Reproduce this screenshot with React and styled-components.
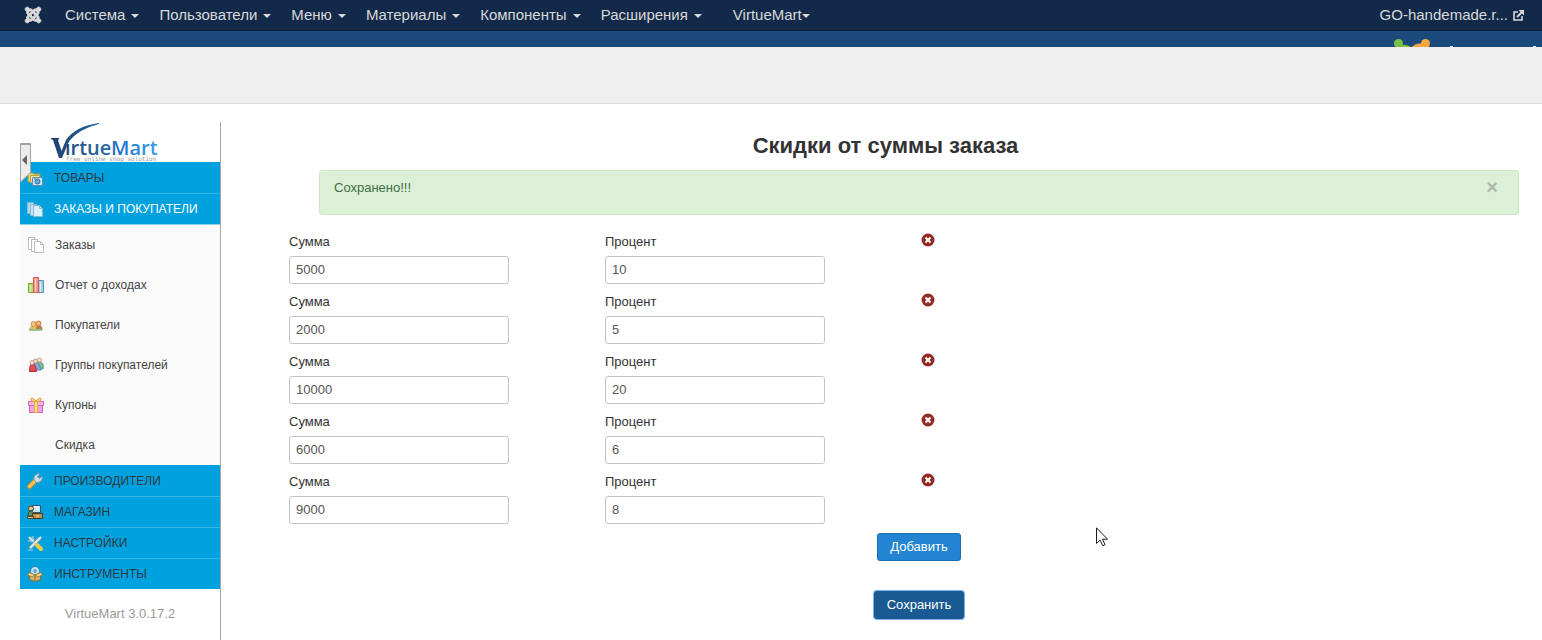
import React, { useState } from 'react';
import styled, { createGlobalStyle } from 'styled-components';
import { FaJoomla } from 'react-icons/fa';

const GlobalStyle = createGlobalStyle`
  * {
    box-sizing: border-box;
  }
  body {
    margin: 0;
    background: #fff;
    color: #333;
    font-family: "Liberation Sans", Arial, sans-serif;
    font-size: 13px;
    line-height: 18px;
  }
  button, input {
    font-family: inherit;
  }
`;

const Page = styled.div`
  display: flex;
  flex-direction: column;
  min-height: 100vh;
`;

const Navbar = styled.nav`
  display: flex;
  align-items: center;
  height: 31px;
  padding: 0 18px 0 24px;
  background: #13294a;
  border-bottom: 1px solid #0d1d35;
  color: #d9d9d9;
  font-size: 15px;
`;

const HomeLink = styled.a`
  display: flex;
  margin-right: 23px;
  color: #d9d9d9;
`;

const NavList = styled.ul`
  display: flex;
  flex: 1;
  gap: 20px;
  margin: 0;
  padding: 0;
  list-style: none;
`;

const NavItem = styled.li`
  margin-left: ${(props) => (props.$apart ? '11px' : '0')};
`;

const NavLink = styled.a`
  display: flex;
  align-items: center;
  gap: ${(props) => (props.$tight ? '0' : '6px')};
  color: #d9d9d9;
  text-decoration: none;
`;

const Caret = styled.span`
  margin-top: 2px;
  border-top: 4px solid #d9d9d9;
  border-left: 4px solid transparent;
  border-right: 4px solid transparent;
`;

const SiteLink = styled.a`
  display: flex;
  align-items: center;
  gap: 5px;
  color: #d9d9d9;
  text-decoration: none;
`;

const Band = styled.header`
  display: flex;
  justify-content: flex-end;
  height: 16px;
  overflow: hidden;
  background: #1a4a7c;
`;

const Subhead = styled.div`
  height: 57px;
  background: #efefef;
  border-bottom: 1px solid #dbdbdb;
`;

const Body = styled.div`
  display: flex;
  flex: 1;
  padding: 18px 23px 0 20px;
`;

const Sidebar = styled.aside`
  position: relative;
  flex: none;
  width: 201px;
  border-right: 1px solid #a8a8a8;
`;

const LogoLink = styled.a`
  display: block;
  height: 40px;
  padding-left: 30px;
`;

const Toggle = styled.button`
  position: absolute;
  top: 21px;
  left: 0;
  padding: 0;
  border: 0;
  background: none;
  line-height: 0;
`;

const SectionLink = styled.a`
  display: flex;
  align-items: center;
  gap: 11px;
  height: 31px;
  padding-left: 7px;
  background: #00a1df;
  border-top: 1px solid #00a1df;
  color: ${(props) => (props.$open ? '#fff' : '#2c3a42')};
  font-size: 12px;
  text-decoration: none;
  text-transform: uppercase;

  & + & {
    border-top-color: #35b4e6;
  }
`;

const SubMenu = styled.ul`
  margin: 0;
  padding: 0;
  background: #fafafa;
  border-top: 1px solid #8fd4ef;
  list-style: none;
`;

const SubLink = styled.a`
  display: flex;
  align-items: center;
  gap: 11px;
  height: 40px;
  padding-left: 8px;
  color: #444;
  font-size: 12px;
  text-decoration: none;
`;

const Version = styled.p`
  margin: 16px 0 0;
  color: #999;
  text-align: center;
`;

const Main = styled.main`
  flex: 1;
  padding: 9px 0 20px 31px;
`;

const Title = styled.h1`
  margin: 0 0 9px;
  font-size: 22px;
  line-height: 30px;
  text-align: center;
`;

const Content = styled.div`
  padding-left: 67px;
`;

const Alert = styled.div`
  display: flex;
  justify-content: space-between;
  align-items: flex-start;
  height: 45px;
  padding: 8px 20px 0 14px;
  background: #dcefd7;
  border: 1px solid #d0e6c4;
  border-radius: 3px;
  color: #3f6f43;
`;

const Close = styled.button`
  padding: 0;
  border: 0;
  background: none;
  color: #abbba7;
  font-size: 20px;
  font-weight: bold;
  line-height: 16px;
`;

const Rows = styled.div`
  display: grid;
  gap: 8px;
  margin: 17px 0 9px -30px;
`;

const Row = styled.div`
  display: grid;
  grid-template-columns: repeat(4, 1fr);
  column-gap: 34px;
`;

const Field = styled.label`
  display: flex;
  flex-direction: column;
  gap: 4px;
  line-height: 20px;
`;

const TextInput = styled.input`
  width: 220px;
  height: 28px;
  padding: 0 6px 2px;
  border: 1px solid #c4c4c4;
  border-radius: 3px;
  background: #fff;
  color: #555;
  font-size: 13px;
`;

const Remove = styled.button`
  justify-self: start;
  align-self: start;
  margin-top: 1px;
  padding: 0;
  border: 0;
  background: none;
  line-height: 0;
`;

const Actions = styled.div`
  display: flex;
  flex-direction: column;
  align-items: center;
  gap: 30px;
`;

const Button = styled.button`
  height: 28px;
  padding: 0 12px 2px;
  background: ${(props) => (props.$active ? '#185a91' : '#2384d3')};
  border: 1px solid ${(props) => (props.$active ? '#185a91' : '#1d6cb0')};
  border-radius: 3px;
  box-shadow: ${(props) => (props.$active ? '0 0 0 1px #7fb0ef' : 'none')};
  color: #fff;
  font-size: 13px;
`;

const Pointer = styled.svg`
  position: absolute;
  top: 527px;
  left: 1096px;
  pointer-events: none;
`;

const navItems = ['Система', 'Пользователи', 'Меню', 'Материалы', 'Компоненты', 'Расширения'];

const discounts = [
  { sum: '5000', percent: '10' },
  { sum: '2000', percent: '5' },
  { sum: '10000', percent: '20' },
  { sum: '6000', percent: '6' },
  { sum: '9000', percent: '8' },
];

const drawings = {
  products: (
    <g>
      <path d="M1 3h5l1 1h6v8H1z" fill="#e9d36a" stroke="#a99a4a" />
      <path d="M3.500 5.500h9v7h-9z" fill="#f2e59a" stroke="#b3a65a" />
      <path d="M5.500 7.500h10v8h-10z" fill="#cfe7f7" stroke="#5d8fb0" />
      <circle cx="10.500" cy="11.500" r="2.500" fill="#6fa9d8" stroke="#2f6ea5" />
      <path d="M7 9h2" stroke="#47779c" />
    </g>
  ),
  orders: (
    <g fill="#d8f0fb" stroke="#8ab9cf">
      <path d="M.5 1.500h6v11h-6z" fill="#a5daf2" />
      <path d="M3.500 3.500h6v11h-6z" fill="#bfe5f6" />
      <path d="M6.500 4.500h6l3 3v8h-9z" />
      <path d="M12.500 4.500v3h3" fill="none" />
    </g>
  ),
  pages: (
    <g fill="#fff" stroke="#bdbdbd">
      <path d="M.5.5h6v12h-6z" />
      <path d="M3.500 2.500h6v12h-6z" />
      <path d="M6.500 4.500h6l3 3v8h-9z" />
      <path d="M12.500 4.500v3h3" fill="none" />
    </g>
  ),
  chart: (
    <g>
      <path d="M.5 6.500h5v9h-5z" fill="#b4dc6a" stroke="#7da43c" />
      <path d="M10.500 3.500h5v12h-5z" fill="#9ccff2" stroke="#5b92c4" />
      <path d="M5.500.5h5v15h-5z" fill="#f59a8d" stroke="#d15a4e" />
      <path d="M2.500 8v7M12.500 5v10" stroke="#e1f2c6" />
      <path d="M7.500 2v13" stroke="#fcd2cb" />
    </g>
  ),
  buyers: (
    <g>
      <path d="M1 13q1-4 4-4h5q4 0 5 4z" fill="#8fc178" />
      <path d="M3 12q0-4 3-4t4 4z" fill="#e5c05a" />
      <path d="M8 12q0-4 3-4t3 4z" fill="#b9794c" />
      <circle cx="5.500" cy="7" r="2.500" fill="#f3c48c" stroke="#cf8f45" />
      <circle cx="10.500" cy="6.500" r="2.500" fill="#efb87b" stroke="#c27d37" />
      <path d="M1 13.500h13" stroke="#a9c89b" />
    </g>
  ),
  groups: (
    <g>
      <path d="M9 12q-1-7 3-7t3 7z" fill="#7fc08a" stroke="#5b9a70" />
      <circle cx="11.500" cy="3" r="2" fill="#fae5d2" stroke="#c9a58e" />
      <path d="M5 13q0-8 3-8t5 8z" fill="#83a9dc" stroke="#5f7fb5" />
      <circle cx="7.500" cy="4" r="2" fill="#f9dfc9" stroke="#b99a86" />
      <path d="M1.500 14.500q0-8 3-8t4 8z" fill="#de4d55" stroke="#b5333c" />
      <circle cx="4" cy="5.500" r="2" fill="#fbe7d9" stroke="#c3a08d" />
    </g>
  ),
  gift: (
    <g>
      <path d="M1.500 7.500h13v8h-13z" fill="#f5a3d8" stroke="#d169ae" />
      <path d="M.5 4.500h15v4H.5z" fill="#f8b7e2" stroke="#d169ae" />
      <path d="M6.500 4.500h3v11h-3z" fill="#fbe08c" stroke="#e2b14c" />
      <path d="M7.500 4.500Q3 5 3 2t5 2q5-5 5-2t-4.500 2.500z" fill="#fbd77b" stroke="#dca241" />
    </g>
  ),
  wrench: (
    <g>
      <path d="M2.500 13.500l6-6" stroke="#c98c24" strokeWidth="5" strokeLinecap="round" />
      <path d="M2.500 13.500l6-6" stroke="#f6c659" strokeWidth="3" strokeLinecap="round" />
      <path d="M7 7q-1-4 2-5.500t4-.5l-2.500 2.500 2 2L15 3q1 3-1 5t-4.500 1.500z" fill="#c9dce8" stroke="#6f93ab" />
    </g>
  ),
  shop: (
    <g>
      <path d="M5.500 1.500h8v7h-8z" fill="#bfe6fa" stroke="#35556b" />
      <path d="M7 3h5M9 5h3" stroke="#fff" />
      <circle cx="4" cy="4.500" r="2.500" fill="#e8c08c" stroke="#5b4529" />
      <path d="M1 12q0-5 3-5t3 5z" fill="#5f8f62" stroke="#2f4c3a" />
      <path d="M5.500 9.500h10v5h-10z" fill="#b9934b" stroke="#4f3d1c" />
      <path d="M.5 12.500h6v2h-6z" fill="#d7c9a1" stroke="#50452b" />
      <path d="M9 12h3" stroke="#f5e1a0" />
    </g>
  ),
  tools: (
    <g>
      <path d="M3 3l9 9" stroke="#7fa3b7" strokeWidth="4" />
      <path d="M2 2l10 10" stroke="#d3e5ee" strokeWidth="2" />
      <path d="M13 3l-10 10" stroke="#7597ab" strokeWidth="4" />
      <path d="M14 2l-11 11" stroke="#dcebf2" strokeWidth="2" />
      <path d="M10 10l4 4" stroke="#e6cf4f" strokeWidth="4" strokeLinecap="round" />
      <path d="M1 15h5M6 1v4M1 6h4" stroke="#bcd4e0" />
    </g>
  ),
  box: (
    <g>
      <circle cx="8" cy="5" r="4.500" fill="#bfe8fa" stroke="#3e81a8" />
      <path d="M6 4l2-1 2 1-1 3H7z" fill="#5ba4cf" />
      <path d="M2.500 7.500l5.500 2 5.500-2v6l-5.500 2-5.500-2z" fill="#d8b66b" stroke="#866a32" />
      <path d="M8 10v5" stroke="#866a32" />
      <path d="M2.500 6.500L.5 9l4.500 2 3-2zM13.500 6.500l2 2.500-4.500 2-3-2z" fill="#f0d797" stroke="#9a7b3b" />
    </g>
  ),
};

function MenuIcon({ name }) {
  return (
    <svg width="16" height="16" viewBox="0 0 16 16" fill="none">
      {drawings[name]}
    </svg>
  );
}

function Section({ icon, open, children }) {
  return (
    <SectionLink href="#" $open={open}>
      <MenuIcon name={icon} />
      {children}
    </SectionLink>
  );
}

function VirtueMartLogo() {
  return (
    <svg width="110" height="40" viewBox="0 0 110 40" role="img" aria-label="VirtueMart">
      <defs>
        <linearGradient id="word" gradientUnits="userSpaceOnUse" x1="0" y1="0" x2="108" y2="0">
          <stop offset="0" stopColor="#1d3f70" />
          <stop offset="0.55" stopColor="#2d6ca8" />
          <stop offset="0.65" stopColor="#1d74cf" />
          <stop offset="1" stopColor="#3ba0ea" />
        </linearGradient>
      </defs>
      <path d="M1 16h8v1l-1 1 3.500 11L16 18Q26 4 49 1v1Q29 7 19 19L12 36H9L3 18l-2-1z" fill="url(#word)" />
      <g fill="url(#word)" fontFamily="Open Sans, sans-serif" fontSize="20" fontWeight="600">
        <text x="15" y="33">irtue</text>
        <text x="61" y="33">Mart</text>
      </g>
      <text x="16" y="39" fill="#9a9a9a" fontFamily="DejaVu Sans Mono, monospace" fontSize="6">
        free online shop solution
      </text>
    </svg>
  );
}

export default function App() {
  const [rows, setRows] = useState(discounts);
  const [saved, setSaved] = useState(true);

  const change = (index, key, value) => {
    setRows(rows.map((row, i) => (i === index ? { ...row, [key]: value } : row)));
  };

  return (
    <Page>
      <GlobalStyle />
      <Navbar>
        <HomeLink href="#" aria-label="Joomla">
          <FaJoomla size={18} stroke="currentColor" strokeWidth={26} />
        </HomeLink>
        <NavList>
          {navItems.map((item) => (
            <NavItem key={item}>
              <NavLink href="#">{item}<Caret /></NavLink>
            </NavItem>
          ))}
          <NavItem $apart>
            <NavLink href="#" $tight>VirtueMart<Caret /></NavLink>
          </NavItem>
        </NavList>
        <SiteLink href="#">
          GO-handemade.r...
          <svg width="11" height="11" viewBox="0 0 11 11" fill="none" stroke="#d9d9d9">
            <path d="M5 2H1v8h8V6" strokeWidth="1.600" />
            <path d="M4 7l5-5" strokeWidth="2" />
            <path d="M5.500 0H11v5.500z" fill="#d9d9d9" stroke="none" />
          </svg>
        </SiteLink>
      </Navbar>
      <Band>
        <svg width="150" height="16" viewBox="0 0 150 16">
          <circle cx="6.500" cy="12.500" r="4.500" fill="#7ac143" />
          <path d="M5 17q6-6 14-1v1z" fill="#7ac143" />
          <circle cx="33.500" cy="12.500" r="4.500" fill="#f9a541" />
          <path d="M19 17q6-7 15-3v3z" fill="#f9a541" />
          <path d="M58 15h3v1h-3zM141 15h3v1h-3z" fill="#e8eef5" />
        </svg>
      </Band>
      <Subhead />
      <Body>
        <Sidebar>
          <LogoLink href="#"><VirtueMartLogo /></LogoLink>
          <Section icon="products">Товары</Section>
          <Section icon="orders" open>Заказы и покупатели</Section>
          <SubMenu>
            <li><SubLink href="#"><MenuIcon name="pages" />Заказы</SubLink></li>
            <li><SubLink href="#"><MenuIcon name="chart" />Отчет о доходах</SubLink></li>
            <li><SubLink href="#"><MenuIcon name="buyers" />Покупатели</SubLink></li>
            <li><SubLink href="#"><MenuIcon name="groups" />Группы покупателей</SubLink></li>
            <li><SubLink href="#"><MenuIcon name="gift" />Купоны</SubLink></li>
            <li><SubLink href="#"><MenuIcon />Скидка</SubLink></li>
          </SubMenu>
          <Section icon="wrench">Производители</Section>
          <Section icon="shop">Магазин</Section>
          <Section icon="tools">Настройки</Section>
          <Section icon="box">Инструменты</Section>
          <Version>VirtueMart 3.0.17.2</Version>
          <Toggle type="button" aria-label="Свернуть меню">
            <svg width="11" height="40" viewBox="0 0 11 40">
              <path d="M.5.5h10v29L.5 39z" fill="#ececec" stroke="#a3a3a3" />
              <path d="M1 1.500h9" stroke="#a3a3a3" />
              <path d="M7 12v10l-5-5z" fill="#666" />
            </svg>
          </Toggle>
        </Sidebar>
        <Main>
          <Title>Скидки от суммы заказа</Title>
          <Content>
            {saved && (
              <Alert role="alert">
                Сохранено!!!
                <Close type="button" aria-label="Закрыть" onClick={() => setSaved(false)}>×</Close>
              </Alert>
            )}
            <Rows>
              {rows.map((row, index) => (
                <Row key={index}>
                  <Field>
                    Сумма
                    <TextInput value={row.sum} onChange={(e) => change(index, 'sum', e.target.value)} />
                  </Field>
                  <Field>
                    Процент
                    <TextInput value={row.percent} onChange={(e) => change(index, 'percent', e.target.value)} />
                  </Field>
                  <Remove
                    type="button"
                    aria-label="Удалить"
                    onClick={() => setRows(rows.filter((r, i) => i !== index))}
                  >
                    <svg width="14" height="14" viewBox="0 0 14 14">
                      <circle cx="7" cy="7" r="6.500" fill="#942a25" />
                      <path d="M4.500 4.500l5 5M9.500 4.500l-5 5" stroke="#fff" strokeWidth="2" />
                    </svg>
                  </Remove>
                </Row>
              ))}
            </Rows>
            <Actions>
              <Button type="button" onClick={() => setRows([...rows, { sum: '', percent: '' }])}>
                Добавить
              </Button>
              <Button type="button" $active onClick={() => setSaved(true)}>Сохранить</Button>
            </Actions>
          </Content>
        </Main>
      </Body>
      <Pointer width="12" height="20" viewBox="0 0 12 20">
        <path d="M.5.8v15.700l3.600-3.400 2.600 5.600 2.300-1-2.500-5.500h5z" fill="#fff" stroke="#1c1c1c" />
      </Pointer>
    </Page>
  );
}
